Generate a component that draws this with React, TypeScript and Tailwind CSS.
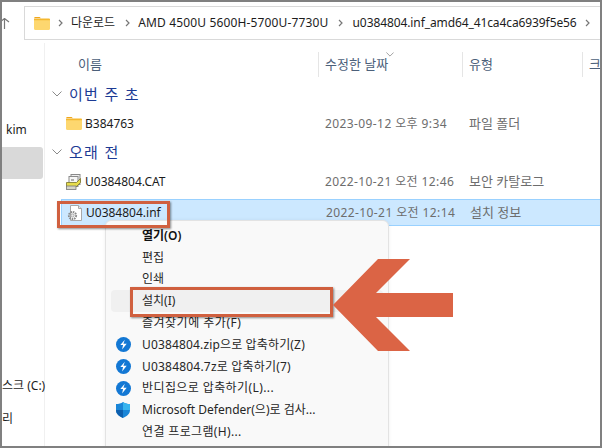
const FONT = "font-['Noto_Sans','Noto_Sans_CJK_KR',sans-serif]";

function FolderIcon({ className }: { className: string }) {
  return (
    <svg viewBox="0 0 16 13" className={className}>
      <path d="M0 1.500C0 .7.6 0 1.400 0h4.200l1.600 1.600h-7.200z" fill="#f0a81c" />
      <path d="M0 2h14.800c.7 0 1.200.5 1.200 1.200v8.600c0 .7-.5 1.200-1.200 1.200H1.200C.5 13 0 12.500 0 11.800z" fill="#fdd76f" />
      <path d="M0 2h6l1.400-.6h7.400c.7 0 1.200.5 1.200 1.200v.6H0z" fill="#f5b82e" />
    </svg>
  );
}

function CatIcon() {
  return (
    <svg viewBox="0 0 16 16" className="h-4 w-4 shrink-0">
      <rect x="5" y="0.5" width="9" height="10" fill="#eee" stroke="#8a8a8a" />
      <rect x="3" y="2.5" width="9" height="10" fill="#f6f6f6" stroke="#8a8a8a" />
      <path d="M5 6h3" stroke="#666" />
      <path d="M0.5 8.500h10l4-4v4l-4 4h-10z" fill="#e6dc4c" stroke="#77722a" strokeWidth="0.8" />
      <rect x="0.5" y="12" width="9.500" height="3.500" fill="#d5d5c8" stroke="#777" strokeWidth="0.8" />
    </svg>
  );
}

function InfIcon() {
  return (
    <svg viewBox="0 0 16 16" className="h-4 w-4 shrink-0">
      <path d="M3.500.5h8l3 3v12h-11z" fill="#fff" stroke="#a8a8a8" />
      <path d="M11.500.5v3h3" fill="#e6e6e6" stroke="#a8a8a8" />
      <circle cx="5.500" cy="10.500" r="3.600" fill="none" stroke="#8a8a8a" strokeWidth="2" strokeDasharray="1.600 .8" />
      <circle cx="5.500" cy="10.500" r="1.600" fill="#e8e8e8" stroke="#999" strokeWidth="0.8" />
    </svg>
  );
}

function BandiIcon() {
  return (
    <svg viewBox="0 0 16 16" className="h-[15px] w-[15px]">
      <circle cx="8" cy="8" r="8" fill="#1378d4" />
      <path d="M9.400 2.800 4.600 8.600h2.900l-1 4.600 4.900-5.900H7.900z" fill="#fff" />
    </svg>
  );
}

function ShieldIcon() {
  return (
    <svg viewBox="0 0 14 16" className="h-4 w-[14px]">
      <path d="M7 0c2 1.400 4.200 2 7 2v6c0 3.800-3 6.400-7 8-4-1.600-7-4.200-7-8V2c2.800 0 5-.6 7-2z" fill="#1a86d8" />
      <path d="M7 0c2 1.400 4.200 2 7 2v6H7z" fill="#37b4ee" />
      <path d="M7 8H0c0 3.800 3 6.400 7 8z" fill="#0d5fae" />
    </svg>
  );
}

function Chevron({ className }: { className: string }) {
  return (
    <svg viewBox="0 0 10 6" className={className} fill="none" stroke="#8a8a8a">
      <path d="M.5.5 5 5 9.500.5" />
    </svg>
  );
}

function CrumbArrow({ className = "" }: { className?: string }) {
  return (
    <svg viewBox="0 0 5 8" className={`h-2 w-[5px] shrink-0 ${className}`} fill="none" stroke="#777" strokeWidth="1.200">
      <path d="M1 1l3 3-3 3" />
    </svg>
  );
}

function Header({ label, width }: { label: string; width: string }) {
  return (
    <div className={`${width} flex h-[25px] shrink-0 items-center border-l border-[#e5e5e5] pl-[6px] text-[13px] text-[#4c607a]`}>
      {label}
    </div>
  );
}

function Group({ label }: { label: string }) {
  return (
    <div className="flex h-[30px] items-center text-[15px] tracking-[1.300px] text-[#1c3a94]">
      <Chevron className="ml-[7px] mr-[7px] h-[6px] w-[10px]" />
      {label}
    </div>
  );
}

function FileRow({
  icon,
  name,
  date,
  kind,
  selected,
}: {
  icon: React.ReactNode;
  name: string;
  date: string;
  kind: string;
  selected?: boolean;
}) {
  return (
    <div
      className={`ml-[16px] flex h-[27px] items-center ${
        selected ? "mt-[4px] border-y border-l border-[#99d1ff] bg-[#cce8ff]" : ""
      }`}
    >
      <div className="flex w-[264px] shrink-0 items-center">
        <div className="flex w-[24px] shrink-0 justify-center pl-[1px]">{icon}</div>
        <span className="text-[#1c1c1c]">{name}</span>
      </div>
      <span className="w-[144px] shrink-0 whitespace-nowrap tracking-[0.4px] text-[#6d6d6d]">{date}</span>
      <span className="whitespace-nowrap text-[13px] text-[#6d6d6d]">{kind}</span>
    </div>
  );
}

function MenuItem({
  icon,
  label,
  hover,
  bold,
  spacing = "",
}: {
  icon?: React.ReactNode;
  label: string;
  hover?: boolean;
  bold?: boolean;
  spacing?: string;
}) {
  return (
    <div
      className={`mx-[5px] flex h-[21.800px] items-center rounded-[4px] ${hover ? "bg-[#f0f0f0]" : ""} ${
        bold ? "font-semibold text-[#111]" : "text-[#262626]"
      }`}
    >
      <div className="flex w-[31px] shrink-0 justify-start pl-[5px]">{icon}</div>
      <span className={`whitespace-nowrap ${spacing}`}>{label}</span>
    </div>
  );
}

export default function App() {
  return (
    <div className={`relative h-[448px] w-[602px] overflow-hidden border-2 border-[#808080] bg-white text-[12px] ${FONT}`}>
      {/* address bar */}
      <div className="flex h-[41px] items-start pt-[4px]">
        <svg viewBox="0 0 8 12" className="mt-[12px] h-[12px] w-[8px] shrink-0" fill="none" stroke="#777" strokeWidth="1.200">
          <path d="M-2 4 2.500 .5 7 4M2.500 1v10" />
        </svg>
        <div className="ml-[14px] flex h-[34px] min-w-0 flex-1 items-center gap-[8px] overflow-hidden border-y border-l border-[#d9d9d9] pl-[9px]">
          <FolderIcon className="h-[13px] w-4 shrink-0" />
          <CrumbArrow />
          <span className="whitespace-nowrap text-[#1c1c1c]">다운로드</span>
          <CrumbArrow className="ml-[2px]" />
          <span className="whitespace-nowrap tracking-[0.150px] text-[#1c1c1c]">AMD 4500U 5600H-5700U-7730U</span>
          <CrumbArrow className="ml-[1px]" />
          <span className="ml-[2px] whitespace-nowrap tracking-[-0.100px] text-[#1c1c1c]">u0384804.inf_amd64_41ca4ca6939f5e56</span>
          <CrumbArrow />
        </div>
      </div>

      {/* body */}
      <div className="flex h-[403px]">
        <div className="flex w-[43px] shrink-0 flex-col border-r border-[#f0f0f0]">
          <div className="mt-[77px] h-[20px] pl-[4px] leading-[20px] text-[#1c1c1c]">kim</div>
          <div className="mt-[7px] h-[32px] w-[41px] rounded-r-[3px] bg-[#d9d9d9]" />
          <div className="mt-[197px] h-[20px] whitespace-nowrap text-right leading-[20px] text-[#1c1c1c]">스크 (C:)</div>
          <div className="mt-[13px] h-[20px] leading-[20px] text-[#1c1c1c]">리</div>
        </div>

        <div className="min-w-0 flex-1 pt-[9px]">
          <div className="flex h-[25px]">
            <div className="flex w-[273px] shrink-0 items-center pl-[33px] text-[13px] text-[#4c607a]">이름</div>
            <Header label="수정한 날짜" width="w-[144px]" />
            <Header label="유형" width="w-[120px]" />
            <Header label="크기" width="w-[40px]" />
          </div>
          <div className="mt-[2px]">
            <Group label="이번 주 초" />
          </div>
          <div className="mt-[1px]">
            <FileRow icon={<FolderIcon className="h-[13px] w-4" />} name="B384763" date="2023-09-12 오후 9:34" kind="파일 폴더" />
          </div>
          <Group label="오래 전" />
          <div className="mt-[1px]">
            <FileRow icon={<CatIcon />} name="U0384804.CAT" date="2022-10-21 오전 12:46" kind="보안 카탈로그" />
          </div>
          <FileRow icon={<InfIcon />} name="U0384804.inf" date="2022-10-21 오전 12:14" kind="설치 정보" selected />
        </div>
      </div>

      {/* sort arrow */}
      <Chevron className="absolute left-[384px] top-[50px] h-[5px] w-[8px]" />

      {/* context menu */}
      <div className="absolute left-[103px] top-[218px] h-[240px] w-[284px] rounded-t-[6px] border border-[#e3e3e3] bg-[#f9f9f9] pt-[4px] shadow-[0_0_4px_rgba(0,0,0,0.06)]">
        <MenuItem label="열기(O)" bold />
        <MenuItem label="편집" />
        <MenuItem label="인쇄" />
        <MenuItem label="설치(I)" hover />
        <MenuItem label="즐겨찾기에 추가(F)" spacing="tracking-[0.5px]" />
        <MenuItem icon={<BandiIcon />} label="U0384804.zip으로 압축하기(Z)" spacing="tracking-[0.150px]" />
        <MenuItem icon={<BandiIcon />} label="U0384804.7z로 압축하기(7)" spacing="tracking-[0.200px]" />
        <MenuItem icon={<BandiIcon />} label="반디집으로 압축하기(L)..." spacing="tracking-[0.400px]" />
        <MenuItem icon={<ShieldIcon />} label="Microsoft Defender(으)로 검사..." />
        <MenuItem label="연결 프로그램(H)..." spacing="tracking-[0.350px]" />
      </div>

      {/* annotations */}
      <div className="absolute left-[55px] top-[199px] h-[27px] w-[113px] border-[3px] border-[#d0603f] shadow-[1px_1px_2px_rgba(0,0,0,0.45)]" />
      <div className="absolute left-[128px] top-[285px] h-[30px] w-[203px] border-[3px] border-[#d0603f] shadow-[1px_1px_2px_rgba(0,0,0,0.45)]" />
      <svg viewBox="0 0 120 92" className="absolute left-[331px] top-[257px] h-[92px] w-[120px]">
        <path d="M0 46 45 0H77L43 34H120V58H43L77 92H45z" fill="#db6445" />
      </svg>
    </div>
  );
}
